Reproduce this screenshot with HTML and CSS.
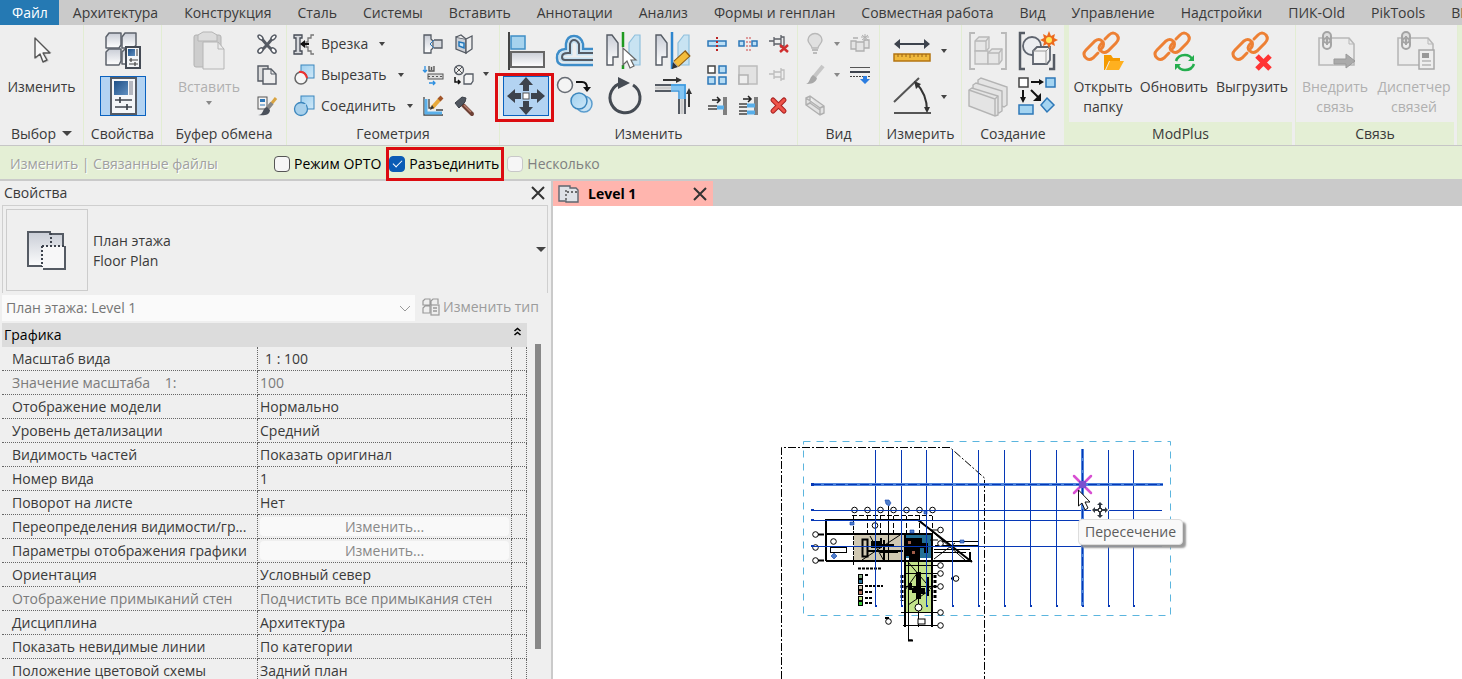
FILE: index.html
```
<!DOCTYPE html>
<html lang="ru">
<head>
<meta charset="utf-8">
<title>Level 1</title>
<link rel="stylesheet" href="styles.css">
</head>
<body>
<svg class="defs" aria-hidden="true">
  <defs>
    <linearGradient id="metal" x1="0" y1="0" x2="0" y2="1"><stop offset="0" stop-color="#c9cdd6"/><stop offset="1" stop-color="#fff"/></linearGradient>
    <linearGradient id="sky" x1="0" y1="0" x2="1" y2="1"><stop offset="0" stop-color="#9fd0ef"/><stop offset="1" stop-color="#cfe8f8"/></linearGradient>
    <linearGradient id="navy" x1="0" y1="0" x2="1" y2="1"><stop offset="0" stop-color="#1e4f86"/><stop offset="1" stop-color="#5f8fc0"/></linearGradient>
    <g id="chain" fill="none" stroke="#ed8034" stroke-width="3" stroke-linecap="round">
      <path d="M16 22 L11 27 Q7 30 4 27 Q0 23 4 19 L13 10 Q17 7 20 10 Q23 13 20 17 L18 19"/>
      <path d="M23 8 L27 4 Q31 0 35 4 Q38 8 34 12 L26 20 Q22 23 19 20 Q15 17 19 13 L21 11"/>
    </g>
    <g id="sheet">
      <path d="M5 7H35L40 13V34H5Z" fill="#ececec" stroke="#b8b8b8" stroke-width="1.6"/>
      <path d="M35 7V13H40" fill="none" stroke="#b8b8b8"/>
      <rect x="9" y="1" width="8" height="11" rx="4" fill="#ddd" stroke="#a4a4a4" stroke-width="2"/>
      <rect x="9" y="7" width="8" height="11" rx="4" fill="none" stroke="#a4a4a4" stroke-width="2"/>
      <path d="M13 5V14" stroke="#a4a4a4" stroke-width="2"/>
    </g>
    <g id="cubes">
      <g fill="url(#metal)" stroke="#5d636c" stroke-width="1.5" stroke-linejoin="round">
        <path d="M3 6 6 2H18V14L16 17H3Z"/><path d="M19 6 22 2H33V14L31 17H19Z"/><path d="M3 21 6 18H18V30L16 34H3Z"/><path d="M19 21 22 18H33V33H19Z"/>
      </g>
    </g>
    <g id="mirrorhalf">
      <path d="M3 4H8L14 12V26H9V34H3Z" fill="url(#metal)" stroke="#555b64" stroke-width="1.4"/>
      <path d="M36 4H31L25 12V34H36Z" fill="#c8e3f2" stroke="#8fc0dd" stroke-width="1.2"/>
    </g>
    <g id="pin" fill="none" stroke="currentColor" stroke-width="1.3"><path d="M1 8H6M6 4V13M6 6H13M6 11H13M13 2V15M13 4H16V13H13"/></g>
  </defs>
</svg>

<nav class="tabs">
  <a class="tab file" href="#">Файл</a>
  <a class="tab" href="#">Архитектура</a>
  <a class="tab" href="#">Конструкция</a>
  <a class="tab" href="#">Сталь</a>
  <a class="tab" href="#">Системы</a>
  <a class="tab" href="#">Вставить</a>
  <a class="tab" href="#">Аннотации</a>
  <a class="tab" href="#">Анализ</a>
  <a class="tab" href="#">Формы и генплан</a>
  <a class="tab" href="#">Совместная работа</a>
  <a class="tab" href="#">Вид</a>
  <a class="tab" href="#">Управление</a>
  <a class="tab" href="#">Надстройки</a>
  <a class="tab" href="#">ПИК-Old</a>
  <a class="tab" href="#">PikTools</a>
  <a class="tab" href="#">BIM</a>
</nav>

<div class="ribbon">
  <section class="panel">
    <div class="body center">
      <button class="big">
        <svg width="40" height="40" viewBox="0 0 40 40"><path d="M15 8V28L20 24 24 32 28 30 24 22H31Z" fill="#bbb" opacity=".6"/><path d="M14 7V27L19 23 22 31 26 29 22 22H29Z" fill="#f7f7f7" stroke="#555" stroke-width="1.4" stroke-linejoin="round"/></svg>
        <span>Изменить</span>
      </button>
    </div>
    <button class="label">Выбор <i class="caret wide"></i></button>
  </section>

  <section class="panel">
    <div class="body stack">
      <button class="ico" aria-label="Тип"><svg width="40" height="40" viewBox="0 0 40 40"><use href="#cubes"/><rect x="23" y="16" width="14" height="21" fill="#f4f6f8" stroke="#454b55" stroke-width="2"/><rect x="25" y="18" width="7" height="7" fill="url(#navy)"/><path d="M34 18V25" stroke="#999" stroke-width="2"/><path d="M26 29H35M26 33H35M28 27V31M32 31V35" stroke="#444" stroke-width="1.2"/></svg></button>
      <button class="ico active" aria-label="Свойства"><svg width="40" height="38" viewBox="0 0 40 38"><rect x="8" y="1" width="25" height="36" fill="#f4f6f8" stroke="#555b64" stroke-width="2"/><rect x="11" y="4" width="14" height="14" fill="url(#navy)"/><rect x="26" y="4" width="4" height="14" fill="#b5b8c0"/><path d="M12 23H29M12 30H29M17 20V26M24 27V33" stroke="#3f454d" stroke-width="1.7"/></svg></button>
    </div>
    <span class="label">Свойства</span>
  </section>

  <section class="panel">
    <div class="body clip">
      <button class="big off">
        <svg width="40" height="40" viewBox="0 0 40 40"><rect x="5" y="4" width="27" height="32" rx="2" fill="#cdcdcd" stroke="#b2b2b2"/><path d="M9 10V4L14 1H23L28 4V10Z" fill="#ddd" stroke="#b5b5b5"/><path d="M14 11H29L35 18V38H14Z" fill="#ebebeb" stroke="#b5b5b5"/><path d="M29 11V18H35" fill="none" stroke="#b5b5b5"/></svg>
        <span>Вставить</span>
        <i class="caret"></i>
      </button>
      <div class="smalls">
        <button class="sm" aria-label="Вырезать"><svg width="22" height="22" viewBox="0 0 22 22"><g fill="none" stroke="#565b64" stroke-width="1.5"><path d="M6 6 11 12 16 17M16 6 11 12 6 17" stroke-width="3"/><ellipse cx="4.500" cy="4.500" rx="1.700" ry="3" transform="rotate(-45 4.500 4.500)" fill="#fff"/><ellipse cx="17.500" cy="4.500" rx="1.700" ry="3" transform="rotate(45 17.500 4.500)" fill="#fff"/><ellipse cx="4.500" cy="17.500" rx="2" ry="3" transform="rotate(45 4.500 17.500)" fill="#fff"/><ellipse cx="17.500" cy="17.500" rx="2" ry="3" transform="rotate(-45 17.500 17.500)" fill="#fff"/></g></svg></button>
        <button class="sm" aria-label="Копировать"><svg width="22" height="22" viewBox="0 0 22 22"><path d="M2 2H12V17H2Z" fill="#ddd" stroke="#555b64" stroke-width="1.4"/><path d="M7 5H15L20 10V20H7Z" fill="#eee" stroke="#555b64" stroke-width="1.4"/><path d="M15 5V10H20" fill="none" stroke="#555b64"/></svg></button>
        <button class="sm" aria-label="Формат"><svg width="22" height="22" viewBox="0 0 22 22"><rect x="2" y="2" width="9" height="12" fill="#f4f4f4" stroke="#555"/><rect x="4" y="4" width="5" height="3" fill="#2e78b8"/><path d="M4 10H9" stroke="#2e78b8"/><path d="M20 3 12 13" stroke="#d9a441" stroke-width="3"/><path d="M16 8 11 14" stroke="#888" stroke-width="4"/><path d="M2 20C8 20 6 13 11 12L14 15C14 20 8 21 2 20Z" fill="#4b515b"/></svg></button>
      </div>
    </div>
    <span class="label">Буфер обмена</span>
  </section>

  <section class="panel">
    <div class="body geom">
      <div class="rows">
        <button class="row"><svg width="22" height="22" viewBox="0 0 22 22"><path d="M1 2H9V5H7V18H9V21H1V18H3V5H1Z" fill="#d8dade" stroke="#454b55" stroke-width="1.300"/><path d="M21 2H18V5H15V9H13V14H15V18H18V21H21" fill="none" stroke="#777" stroke-width="1.300"/><path d="M8 11H16" stroke="#111" stroke-width="2"/><path d="M12 7 7 11 12 15Z" fill="#111"/></svg>Врезка<i class="caret"></i></button>
        <button class="row"><svg width="22" height="22" viewBox="0 0 22 22"><rect x="8" y="1" width="13" height="13" fill="url(#sky)" stroke="#3b86bd"/><circle cx="8" cy="14" r="6" fill="#f6f6f6" stroke="#666" stroke-width="1.500"/><path d="M6 8Q12 7 14 14" fill="none" stroke="#e33" stroke-width="2"/></svg>Вырезать<i class="caret"></i></button>
        <button class="row"><svg width="22" height="22" viewBox="0 0 22 22"><rect x="8" y="1" width="13" height="13" fill="url(#sky)" stroke="#3b86bd"/><circle cx="8" cy="14" r="6.500" fill="#a8d0eb" stroke="#3b86bd" stroke-width="1.300"/><path d="M9 9H13V13H9Z" fill="#a8d0eb"/></svg>Соединить<i class="caret"></i></button>
      </div>
      <div class="grid2">
        <button class="sm" aria-label="Проём"><svg width="22" height="22" viewBox="0 0 22 22"><path d="M2 2H9V6L11 8V15L9 17V20H2Z" fill="url(#metal)" stroke="#555b64" stroke-width="1.300"/><path d="M12 7H20V15H12" fill="#d6d9de" stroke="#555b64" stroke-width="1.300"/><path d="M12 7 8 11 12 15" fill="none" stroke="#2e78b8"/></svg></button>
        <button class="sm" aria-label="Стена"><svg width="22" height="22" viewBox="0 0 22 22"><path d="M3 4 13 6V20L3 16Z" fill="#cdd0d6" stroke="#555b64" stroke-width="1.300"/><path d="M3 4 8 2 13 6 19 3V16L13 20V6" fill="#eee" stroke="#555b64" stroke-width="1.300"/><path d="M6 9 11 10V15L6 13Z" fill="#cde9fb" stroke="#2277bb" stroke-width="1.500"/></svg></button>
        <button class="sm" aria-label="Балка"><svg width="22" height="22" viewBox="0 0 22 22"><path d="M3 2V8M1 6 3 8 5 6M7 19H13M11 17 13 19 11 21" stroke="#2c8fe0" fill="none" stroke-width="1.300"/><path d="M7 2V7H12V2M9.500 3V6" fill="#ddd" stroke="#555" stroke-width="1.300"/><rect x="6" y="10" width="15" height="5" fill="#ddd" stroke="#555"/><path d="M6 12.500H21" stroke="#555" stroke-dasharray="2 2"/></svg></button>
        <button class="sm" aria-label="Разделить"><svg width="22" height="22" viewBox="0 0 22 22"><circle cx="6" cy="6" r="4.500" fill="#eee" stroke="#555b64" stroke-width="1.300"/><path d="M3 3 9 9M9 3 3 9" stroke="#555"/><path d="M2 13V18H7M5 16 7 18 5 20" fill="none" stroke="#111" stroke-width="1.500"/><path d="M11 12 13 10H20V17L18 20H11Z" fill="#f4f4f4" stroke="#555b64" stroke-width="1.300"/></svg></button>
        <button class="sm" aria-label="Соединения стен"><svg width="22" height="22" viewBox="0 0 22 22"><path d="M2 2V20H21M7 4V13H10M14 15H21" fill="none" stroke="#444" stroke-width="1.300"/><path d="M4 4V18H20" fill="none" stroke="#5ab0ea" stroke-width="3"/><path d="M10 13 18 4" stroke="#e8a93a" stroke-width="4"/><path d="M17 5 20 2" stroke="#a1552a" stroke-width="4"/><path d="M8 15 10 10 12 13Z" fill="#333"/></svg></button>
        <button class="sm" aria-label="Демонтаж"><svg width="22" height="22" viewBox="0 0 22 22"><path d="M10 10 19 19" stroke="#6d4035" stroke-width="4" stroke-linecap="round"/><path d="M11 10 18 17" stroke="#b97f6d" stroke-width="1.500"/><path d="M2 8 9 2 13 3 12 7 6 13Z" fill="#50565f" stroke="#3b4048"/></svg></button>
      </div>
      <i class="caret"></i>
    </div>
    <span class="label">Геометрия</span>
  </section>

  <section class="panel">
    <div class="body modify">
      <div class="grid4">
        <button class="ico" aria-label="Выровнять"><svg width="40" height="40" viewBox="0 0 40 40"><path d="M3 1V39" stroke="#444" stroke-width="2"/><rect x="5" y="5" width="14" height="13" fill="#a6d3ee" stroke="#3f8fc6" stroke-width="1.500"/><rect x="5" y="21" width="33" height="15" fill="url(#metal)" stroke="#666" stroke-width="2"/></svg></button>
        <button class="ico" aria-label="Сместить"><svg width="40" height="40" viewBox="0 0 40 40"><path d="M38 34H9Q2 34 2 27 2 18 11 18V13Q12 5 19 5T28 13V18H38" fill="none" stroke="#3d8dc9" stroke-width="2.500"/><path d="M38 29H11Q6 29 6 25 7 22 13 22H15V13Q16 9 19 9T24 13V22H38" fill="none" stroke="#c5e1f2" stroke-width="5"/><path d="M38 29H10Q7 29 7 26 7 22 13 22H15V13Q16 9 19 9T24 13V22H38" fill="none" stroke="#555b64" stroke-width="2"/></svg></button>
        <button class="ico" aria-label="Отразить - выбрать ось"><svg width="40" height="40" viewBox="0 0 40 40"><use href="#mirrorhalf"/><path d="M19 1V16M19 34V38" stroke="#1f9a1f" stroke-width="2.500"/><path d="M19 17V34L23 30 26 37 30 35 27 29H32Z" fill="#fff" stroke="#666" stroke-width="1.200"/></svg></button>
        <button class="ico" aria-label="Отразить - нарисовать ось"><svg width="40" height="40" viewBox="0 0 40 40"><use href="#mirrorhalf"/><path d="M19 1V38" stroke="#2e86cf" stroke-width="2.500"/><path d="M23 33 35 22" stroke="#8b5a14" stroke-width="8"/><path d="M23 33 34 23" stroke="#f3bd3c" stroke-width="6"/><path d="M19 38 20 31 25 36Z" fill="#333"/></svg></button>
        <button class="ico active marked" aria-label="Переместить"><svg width="40" height="38" viewBox="0 0 40 38"><path d="M20 0 27 8H23V14H17V8H13ZM20 38 27 30H23V24H17V30H13ZM1 19 9 12V16H15V22H9V26ZM39 19 31 12V16H25V22H31V26Z" fill="#3d434d"/><rect x="17" y="16" width="6" height="6" fill="#fff" stroke="#555"/></svg></button>
        <button class="ico" aria-label="Копировать"><svg width="40" height="40" viewBox="0 0 40 40"><circle cx="10" cy="8" r="7.500" fill="#f4f4f4" stroke="#666b73" stroke-width="1.500"/><path d="M21 5H27Q32 5 32 11" fill="none" stroke="#111" stroke-width="2"/><path d="M28 10H36L32 15Z" fill="#111"/><circle cx="29" cy="27" r="8" fill="#c8e3f4" stroke="#5b9dce" stroke-width="1.500"/><circle cx="24" cy="24" r="8" fill="url(#sky)" stroke="#3b86bd" stroke-width="1.500"/></svg></button>
        <button class="ico" aria-label="Повернуть"><svg width="40" height="40" viewBox="0 0 40 40"><path d="M29 8A15 15 0 1 1 18 6" fill="none" stroke="#454b53" stroke-width="3"/><path d="M14 0 26 6 14 12Z" fill="#454b53"/></svg></button>
        <button class="ico" aria-label="Обрезать"><svg width="40" height="40" viewBox="0 0 40 40"><path d="M2 8H18M2 14H18M26 22V37M32 22V37" stroke="#555b64" stroke-width="2"/><path d="M2 11H18M29 22V37" stroke="#ccc" stroke-width="3"/><path d="M18 10H30V22" fill="none" stroke="#84c6f3" stroke-width="6"/><path d="M18 8H32V22M18 14H26V22" fill="none" stroke="#3996dd" stroke-width="1.500"/><path d="M10 3H25M36 30V14" stroke="#333" stroke-width="2"/><path d="M23 0 29 3 23 6ZM33 17 36 11 39 17Z" fill="#333"/></svg></button>
      </div>
      <div class="grid3">
        <button class="sm" aria-label="Разделить элемент"><svg width="22" height="22" viewBox="0 0 22 22"><rect x="2" y="8" width="18" height="5" fill="#bfe0f5" stroke="#2e78b8" stroke-width="1.500"/><path d="M11 4V18" stroke="#b22" stroke-width="2" stroke-dasharray="2 2"/></svg></button>
        <button class="sm" aria-label="Разделить с зазором"><svg width="22" height="22" viewBox="0 0 22 22"><rect x="2" y="8" width="5" height="5" fill="#bfe0f5" stroke="#2e78b8" stroke-width="1.500"/><rect x="15" y="8" width="5" height="5" fill="#bfe0f5" stroke="#2e78b8" stroke-width="1.500"/><path d="M10 4V18M13 4V18" stroke="#c44" stroke-width="1" stroke-dasharray="2 2"/></svg></button>
        <button class="sm" aria-label="Открепить"><svg width="22" height="22" viewBox="0 0 22 22" color="#5b5f66"><use href="#pin"/><path d="M12 12 20 19M20 12 12 19" stroke="#cf2e2e" stroke-width="2.500"/></svg></button>
        <button class="sm" aria-label="Массив"><svg width="22" height="22" viewBox="0 0 22 22"><rect x="2" y="2" width="7" height="7" fill="#fff" stroke="#444" stroke-width="1.500"/><g fill="#b6dcf4" stroke="#2e78b8" stroke-width="1.500"><rect x="13" y="2" width="7" height="7"/><rect x="2" y="13" width="7" height="7"/><rect x="13" y="13" width="7" height="7"/></g></svg></button>
        <button class="sm" aria-label="Масштаб"><svg width="22" height="22" viewBox="0 0 22 22"><rect x="2" y="2" width="18" height="18" fill="#e2e2e2" stroke="#bcbcbc" stroke-width="1.500"/><rect x="2" y="11" width="9" height="9" fill="#eee" stroke="#b2b2b2" stroke-width="1.500"/></svg></button>
        <button class="sm" aria-label="Закрепить"><svg width="22" height="22" viewBox="0 -2 22 22" color="#bdbdbd"><use href="#pin"/></svg></button>
        <button class="sm" aria-label="Обрезать один"><svg width="22" height="22" viewBox="0 0 22 22"><path d="M2 11H11M2 14H11M18 2V20M20 2V20" stroke="#444" stroke-width="1.300"/><path d="M11 12.500H18" stroke="#58aee9" stroke-width="4"/><path d="M6 5H13M11 2 14 5 11 8" fill="none" stroke="#222" stroke-width="1.500"/></svg></button>
        <button class="sm" aria-label="Обрезать несколько"><svg width="22" height="22" viewBox="0 0 22 22"><path d="M2 9H10M2 12H10M2 16H10M2 19H10M18 2V20M20 2V20" stroke="#444" stroke-width="1.300"/><path d="M10 10.500H18M10 17.500H18" stroke="#58aee9" stroke-width="4"/><path d="M6 4H13M11 1 14 4 11 7" fill="none" stroke="#222" stroke-width="1.500"/></svg></button>
        <button class="sm" aria-label="Удалить"><svg width="22" height="22" viewBox="0 0 22 22"><path d="M5 5 16 16M16 5 5 16" stroke="#a92020" stroke-width="5" stroke-linecap="round"/><path d="M5 5 16 16M16 5 5 16" stroke="#ee5349" stroke-width="3" stroke-linecap="round"/></svg></button>
      </div>
    </div>
    <span class="label">Изменить</span>
  </section>

  <section class="panel">
    <div class="body view">
      <button class="sm" aria-label="Скрыть"><svg width="22" height="22" viewBox="0 0 22 22"><path d="M8 15C8 12 4 11 4 7A7 6.500 0 0 1 18 7C18 11 14 12 14 15Z" fill="#e0e0e0" stroke="#b8b8b8" stroke-width="1.400"/><path d="M8 17H14M9 20H13" stroke="#aaa" stroke-width="1.500"/></svg></button>
      <i class="caret soft"></i>
      <button class="sm" aria-label="Рамка"><svg width="22" height="22" viewBox="0 0 22 22"><path d="M2 8H7V16H2ZM7 9H15V18H7ZM15 7H20V15H15ZM4 5H9" fill="#e4e4e4" stroke="#b0b0b0" stroke-width="1.300"/><path d="M16 1V8M12 4H20M13 2 19 7M19 2 13 7" stroke="#b0b0b0"/></svg></button>
      <button class="sm" aria-label="Переопределить"><svg width="22" height="22" viewBox="0 0 22 22"><path d="M19 2 10 13" stroke="#c6c6c6" stroke-width="4"/><path d="M2 20C6 19 5 14 9 11L13 14C12 19 7 20 2 20Z" fill="#a8a8a8"/></svg></button>
      <i class="caret soft"></i>
      <button class="sm" aria-label="Толщина линий"><svg width="22" height="22" viewBox="0 0 22 22"><path d="M1 3.500H21" stroke="#555"/><path d="M1 8H21" stroke="#3d434d" stroke-width="2"/><path d="M1 12.500H21" stroke="#444" stroke-dasharray="2 1"/><path d="M14 12H18V15H21L16 20 11 15H14Z" fill="#2b7de0"/></svg></button>
      <button class="sm" aria-label="Сечение"><svg width="22" height="22" viewBox="0 0 22 22"><path d="M2 3 6 1 20 11V18L16 20 2 10ZM2 3 16 13V20M16 13 20 11M6 1V8L16 15M6 8 2 10" fill="#e3e3e3" stroke="#b0b0b0" stroke-width="1.400"/></svg></button>
    </div>
    <span class="label">Вид</span>
  </section>

  <section class="panel">
    <div class="body measure">
      <button class="ico" aria-label="Линейка"><svg width="40" height="40" viewBox="0 0 40 40"><path d="M4 13H36" stroke="#3d434d" stroke-width="2"/><path d="M2 13 8 8V18ZM38 13 32 8V18Z" fill="#3d434d"/><rect x="2" y="23" width="36" height="7" fill="#f0b93c" stroke="#b47512" stroke-width="1.500"/><path d="M6 23V26M10 23V26M14 23V26M18 23V27M22 23V26M26 23V26M30 23V26M34 23V26" stroke="#9a6516"/></svg></button>
      <i class="caret"></i>
      <button class="ico" aria-label="Угол"><svg width="40" height="40" viewBox="0 0 40 40"><path d="M2 25 27 1M2 36H39" stroke="#555" stroke-width="2"/><path d="M24 6Q35 17 35 34" fill="none" stroke="#333" stroke-width="2"/><path d="M22 4 29 7 24 12ZM32 30H38L35 36Z" fill="#333"/></svg></button>
      <i class="caret"></i>
    </div>
    <span class="label">Измерить</span>
  </section>

  <section class="panel">
    <div class="body create">
      <button class="ico" aria-label="Сборка"><svg width="40" height="40" viewBox="0 0 40 40"><path d="M7 2H2V38H7M33 2H38V38H33" fill="none" stroke="#b9b9b9" stroke-width="1.800"/><g fill="#e6e6e6" stroke="#b9b9b9" stroke-width="1.300"><path d="M7 10 11 6H21V17L18 20H7Z"/><path d="M7 20H20V33H7Z"/><path d="M20 22 24 18H34V29L31 33H20Z"/><path d="M7 10H18V20M18 10 21 6M20 22H31V33M31 22 34 18" fill="none"/></g></svg></button>
      <button class="ico" aria-label="Группа"><svg width="40" height="40" viewBox="0 0 40 40"><path d="M8 2H3V38H8M32 38H37V23" fill="none" stroke="#555b64" stroke-width="2.500"/><circle cx="15" cy="15" r="9" fill="#eceef1" stroke="#5f656f" stroke-width="1.800"/><path d="M16 20 20 16H33V29L30 33H16Z" fill="#f3f3f3" stroke="#5f656f" stroke-width="1.800"/><path d="M16 20H29V33M29 20 33 16" stroke="#999" fill="none"/><path d="M32 0 34 5 38 3 37 7 41 9 37 11 38 15 34 13 32 17 30 13 26 15 27 11 23 9 27 7 26 3 30 5Z" fill="#ec6a1c"/><circle cx="32" cy="9" r="3" fill="#ffe75c"/></svg></button>
      <button class="ico" aria-label="Части"><svg width="40" height="40" viewBox="0 0 40 40"><g fill="#e4e4e4" stroke="#b4b4b4" stroke-width="1.400"><path d="M10 3 13 1 39 10V28L36 30 10 20Z"/><path d="M5 8 8 6 34 14V34L31 36 5 25Z"/><path d="M1 13 4 11 30 19V38L27 39 1 29Z"/><path d="M1 13 27 22V39M27 22 30 19" fill="none"/></g></svg></button>
      <button class="ico" aria-label="Подобные"><svg width="40" height="40" viewBox="0 0 40 40"><rect x="2" y="1" width="9" height="9" fill="#fff" stroke="#444" stroke-width="1.500"/><g fill="#a4d4f1" stroke="#2e78b8" stroke-width="1.500"><rect x="29" y="1" width="9" height="9"/><rect x="2" y="28" width="14" height="9"/><path d="M30 21 37 28 30 35 24 28Z"/></g><path d="M14 5H24M6 13V23M14 13 22 21" stroke="#111" stroke-width="2"/><path d="M22 2 27 5 22 8ZM3 20H9L6 26ZM24 16V24H16Z" fill="#111"/></svg></button>
    </div>
    <span class="label">Создание</span>
  </section>

  <section class="panel ctx">
    <div class="body links">
      <button class="big"><svg width="42" height="40" viewBox="0 0 42 40"><use href="#chain"/><path d="M22 24H29L31 27H38V30H27L23 39H22Z" fill="#f59a00"/><path d="M28 30H42L37 39H24Z" fill="#ffb01f"/></svg><span>Открыть папку</span></button>
      <button class="big"><svg width="42" height="40" viewBox="0 0 42 40"><use href="#chain"/><path d="M23 30Q25 24 32 24 37 24 39 28M41 33Q39 39 32 39 27 39 25 35" fill="none" stroke="#25ae4e" stroke-width="2.500"/><path d="M41 24V30H35ZM22 39V33H28Z" fill="#25ae4e"/></svg><span>Обновить</span></button>
      <button class="big"><svg width="42" height="40" viewBox="0 0 42 40"><use href="#chain"/><path d="M26 25 39 38M39 25 26 38" stroke="#ff3434" stroke-width="5"/></svg><span>Выгрузить</span></button>
    </div>
    <span class="label">ModPlus</span>
  </section>

  <section class="panel ctx">
    <div class="body links two">
      <button class="big off"><svg width="42" height="40" viewBox="0 0 42 40"><use href="#sheet"/><path d="M20 28H32V23L41 30 32 37V33H20Z" fill="#aaa" stroke="#999"/></svg><span>Внедрить связь</span></button>
      <button class="big off"><svg width="42" height="40" viewBox="0 0 42 40"><use href="#sheet"/><rect x="26" y="19" width="15" height="19" fill="#eee" stroke="#a8a8a8" stroke-width="1.500"/><rect x="29" y="22" width="7" height="5" fill="#999"/><path d="M29 30H38M29 34H38" stroke="#999"/></svg><span>Диспетчер связей</span></button>
    </div>
    <span class="label">Связь</span>
  </section>
</div>

<div class="options">
  <span class="mode">Изменить | Связанные файлы</span>
  <label class="opt"><input type="checkbox">Режим ОРТО</label>
  <label class="opt marked"><input type="checkbox" checked>Разъединить</label>
  <label class="opt dim"><input type="checkbox" disabled>Несколько</label>
</div>

<div class="work">
  <aside class="props">
    <header class="props-head"><span>Свойства</span><button class="close" aria-label="Закрыть свойства"><svg width="14" height="14" viewBox="0 0 14 14"><path d="M1 1 13 13M13 1 1 13" stroke="#333" stroke-width="2"/></svg></button></header>
    <div class="type">
      <div class="thumb"><svg width="42" height="42" viewBox="0 0 42 42"><path d="M2 3H25V5H37V16H38V39H17V37H2Z" fill="url(#metal)"/><path d="M16 17H39V40H16Z" fill="#f7f7f8"/><path d="M16 37H2V3H24V5H37V16M39 17V40H17" fill="none" stroke="#555b64" stroke-width="2"/><path d="M25 4V17M16 17H39M16 17V38" fill="none" stroke="#3d434d" stroke-width="2" stroke-dasharray="2 2"/></svg></div>
      <div class="type-name">План этажа<br>Floor Plan</div>
      <button class="type-open" aria-label="Выбор типа"><i class="caret wide"></i></button>
    </div>
    <div class="instance">
      <select aria-label="Экземпляр" disabled><option>План этажа: Level 1</option></select>
      <button disabled><svg width="18" height="18" viewBox="0 0 18 18"><path d="M1 3 3 1H8V7H1ZM9 3 11 1H16V6M1 10 3 8H8V15H1ZM9 3V7" fill="none" stroke="#999" stroke-width="1.200"/><rect x="9" y="7" width="8" height="10" fill="#eee" stroke="#999" stroke-width="1.200"/><path d="M11 10H15M11 13H15" stroke="#999" stroke-width="1.300"/></svg>Изменить тип</button>
    </div>
    <div class="list">
      <table>
        <colgroup><col class="c1"><col class="c2"><col class="c3"></colgroup>
        <thead><tr><th colspan="3"><div class="group">Графика<svg width="9" height="10" viewBox="0 0 9 10"><path d="M1.500 4 4.500 1.500 7.500 4M1.500 8 4.500 5.500 7.500 8" fill="none" stroke="#000" stroke-width="1.600"/></svg></div></th></tr></thead>
        <tbody>
          <tr><td>Масштаб вида</td><td class="indent">1 : 100</td><td></td></tr>
          <tr class="ro"><td>Значение масштаба&nbsp;&nbsp;&nbsp; 1:</td><td>100</td><td></td></tr>
          <tr><td>Отображение модели</td><td>Нормально</td><td></td></tr>
          <tr><td>Уровень детализации</td><td>Средний</td><td></td></tr>
          <tr><td>Видимость частей</td><td>Показать оригинал</td><td></td></tr>
          <tr><td>Номер вида</td><td>1</td><td></td></tr>
          <tr><td>Поворот на листе</td><td>Нет</td><td></td></tr>
          <tr><td>Переопределения видимости/гр...</td><td><button>Изменить...</button></td><td></td></tr>
          <tr><td>Параметры отображения графики</td><td><button>Изменить...</button></td><td></td></tr>
          <tr><td>Ориентация</td><td>Условный север</td><td></td></tr>
          <tr class="ro"><td>Отображение примыканий стен</td><td>Подчистить все примыкания стен</td><td></td></tr>
          <tr><td>Дисциплина</td><td>Архитектура</td><td></td></tr>
          <tr><td>Показать невидимые линии</td><td>По категории</td><td></td></tr>
          <tr><td>Положение цветовой схемы</td><td>Задний план</td><td></td></tr>
        </tbody>
      </table>
      <div class="track"><div class="thumbbar"></div></div>
    </div>
  </aside>

  <main class="view-area">
    <div class="doc-tabs">
      <div class="doc-tab"><svg width="22" height="20" viewBox="0 0 22 20"><path d="M1 2H12V4H18L20 6V18H8V17H1Z" fill="#dfe2e7" stroke="#5f656f" stroke-width="1.400"/><path d="M8 6V17M9 8H19" stroke="#444" stroke-width="1.300" stroke-dasharray="2 2" fill="none"/></svg><b>Level 1</b><button class="close" aria-label="Закрыть вид"><svg width="14" height="14" viewBox="0 0 14 14"><path d="M1 1 13 13M13 1 1 13" stroke="#333" stroke-width="2"/></svg></button></div>
    </div>
    <div class="canvas">
      <svg class="plan" width="909" height="473" viewBox="553 206 909 473">
        <path d="M781.500 679V447.500H950L984.500 478V679" fill="none" stroke="#000" stroke-dasharray="8 2 2 2"/>
        <rect x="803.500" y="441.500" width="367" height="174" fill="none" stroke="#5bb5de" stroke-dasharray="7 6"/>
        <!-- rooms -->
        <rect x="854" y="534" width="51" height="27" fill="#d0c8b2"/>
        <rect x="905" y="534" width="27" height="24" fill="#226f96"/>
        <rect x="905" y="560" width="27" height="52" fill="#c3e38c"/>
        <g fill="none" stroke="#000">
          <path d="M826 561V520H918L972 562M826 534H932M826 561H972" stroke-width="2"/>
          <path d="M905 534V627M932 534V627" stroke-width="2"/>
          <path d="M853.500 516V566" stroke-dasharray="4 1"/>
          <path d="M867.500 516V534M880.500 516V534M893.500 516V534M906.500 516V534M919.500 516V534M932.500 516V534M852 515.500H932" stroke-dasharray="5 2"/>
          <path d="M888.500 506V561M908.500 560V640H912M918.500 556V627M901 612.500H940M903 625.500H940M906 573.500H940M906 565.500H940M906 586.500H940"/>
          <path d="M919 520 965 560M870 536 884 561M900 535 862 560M908 562 932 590M930 590 908 605M918 572 905 590M935 545.500H978M942 541.500H978M934 552.500H966M934 549.500H970M934 559 955 543M930 530 938 530M930 540 938 540" />
          <rect x="830.500" y="547.500" width="16" height="5"/><rect x="862.500" y="539.500" width="5" height="17" stroke-width="2"/>
          <path d="M874 545H894M884 540V560M880 552H898M868 551H903" stroke-width="2"/>
          <path d="M902 575V601M935 575V601" stroke-width="3" stroke-dasharray="3 2"/><path d="M970 552V560" stroke-width="2"/>
        </g>
        <path d="M871 541H880V538H882V548H871ZM905 538H922V543H928V553H924V548H920V562H909V556H905ZM914 587H916V572H921V588H925V594H921V599H916V593H912V588ZM908 583H912V590H908ZM926 577H929V596H926Z" fill="#000"/>
        <path d="M908 541H911V544H908ZM912 551H915V554H912Z" fill="#a25d48"/>
        <g fill="#fff" stroke="#000" stroke-width="1">
          <circle cx="854.500" cy="510" r="2.800"/><circle cx="867.500" cy="510" r="2.800"/><circle cx="880.500" cy="510" r="2.800"/><circle cx="893.500" cy="510" r="2.800"/><circle cx="906.500" cy="510" r="2.800"/><circle cx="919.500" cy="510" r="2.800"/><circle cx="932.500" cy="510" r="2.800"/>
          <circle cx="815.500" cy="534.500" r="2.800"/><circle cx="815.500" cy="547.500" r="2.800"/><circle cx="815.500" cy="560.500" r="2.800"/><circle cx="833.500" cy="541.500" r="2.800"/><circle cx="875" cy="525.500" r="2.800"/>
          <circle cx="940.500" cy="530" r="2.800"/><circle cx="940.500" cy="543.500" r="2.800"/><circle cx="940.500" cy="565.500" r="2.800"/><circle cx="940.500" cy="573.500" r="2.800"/><circle cx="940.500" cy="586.500" r="2.800"/><circle cx="940.500" cy="612.500" r="2.800"/><circle cx="940.500" cy="625.500" r="2.800"/><circle cx="956" cy="578.500" r="2.800"/><circle cx="888.500" cy="621.500" r="2.800"/><circle cx="918.500" cy="607.500" r="3.500"/>
          <rect x="918" y="619" width="7" height="5"/>
        </g>
        <path d="M818 534.500H824M818 560.500H824M951 578.500H954M885 618 889 618M908 640.500H913" stroke="#000" stroke-width="2"/>
        <path d="M858 568.500H881M865 575H869M865 586H883M865 592H873M865 598H872M865 603H873" stroke="#000" stroke-width="2" stroke-dasharray="3 1"/>
        <g stroke="#000" stroke-width="1"><rect x="858.500" y="574.500" width="4" height="4" fill="#8bae86"/><rect x="858.500" y="579.500" width="4" height="4" fill="#226f96"/><rect x="858.500" y="585.500" width="4" height="4" fill="#d0c8b2"/><rect x="858.500" y="590.500" width="4" height="4" fill="#b3725d"/><rect x="858.500" y="596.500" width="4" height="4" fill="#c3e38c"/><rect x="858.500" y="601.500" width="4" height="4" fill="#36c837"/></g>
        <path d="M885 500H889L891 503 889 506 886 504ZM831 556 834 553 837 556 834 559ZM850 522H854V525H850ZM910 530H914V533H910ZM960 540H964V543H960ZM924 511H927V514H924Z" fill="#4f7ec9" stroke="#0a3caf" stroke-width=".6"/>
        <!-- grids -->
        <path d="M875.500 450V607M901.500 450V607M926.500 450V607M952.500 450V607M978.500 450V607M1004.500 450V607M1030.500 450V607M1056.500 450V607M1108.500 450V607M1133.500 450V607M812 510.500H1162M812 520.500H1162M812 546.500H1162" stroke="#0638b6"/>
        <path d="M1082.500 449V606M812 484.500H1163" stroke="#4d83dc" stroke-width="3"/>
        <path d="M1082.500 449V606M812 484.500H1163" stroke="#0638b6" stroke-dasharray="9 3"/>
        <path d="M875 605h2v2h-2zM901 605h2v2h-2zM926 605h2v2h-2zM952 605h2v2h-2zM978 605h2v2h-2zM1004 605h2v2h-2zM1030 605h2v2h-2zM1056 605h2v2h-2zM1082 605h2v2h-2zM1108 605h2v2h-2zM1133 605h2v2h-2zM811 483h3v3h-3zM811 509h3v2h-3zM811 519h3v2h-3zM811 545h3v2h-3z" fill="#0638b6"/>
        <!-- snap marker and cursor -->
        <path d="M1074 476 1091 493M1091 476 1074 493" stroke="#d84fd2" stroke-width="2.500" stroke-linecap="round"/><rect x="1079" y="481" width="7" height="7" fill="#7b50cf"/>
        <path d="M1078.500 490V506L1082 503 1085 510 1088 508 1085 502H1090Z" fill="#fff" stroke="#111"/>
        <path d="M1100 502 1103 505H1101V508H1099V505H1097ZM1100 518 1103 515H1101V512H1099V515H1097ZM1092 510 1095 507V509H1098V511H1095V513ZM1108 510 1105 507V509H1102V511H1105V513Z" fill="#333a44" stroke="#fff" stroke-width="2" paint-order="stroke"/><rect x="1098.500" y="508.500" width="3" height="3" fill="#fff" stroke="#333"/>
      </svg>
      <div class="tip" role="tooltip">Пересечение</div>
    </div>
  </main>
</div>
</body>
</html>
```
FILE: styles.css
```
* { box-sizing: border-box; }

body {
  margin: 0;
  height: 100vh;
  overflow: hidden;
  display: flex;
  flex-direction: column;
  background: #eeeeee;
  color: #3a3a3a;
  font: 14px/20px "Open Sans", "Noto Sans", sans-serif;
}

button {
  margin: 0;
  padding: 0;
  border: 0;
  background: none;
  color: inherit;
  font: inherit;
}

svg { display: block; flex: none; overflow: visible; }
.defs { position: absolute; width: 0; height: 0; }

.caret {
  display: inline-block;
  flex: none;
  width: 0;
  height: 0;
  border: 3px solid transparent;
  border-top: 4px solid #444;
  border-bottom: 0;
}
.caret.wide { border-width: 5px 5px 0; }
.caret.soft { border-top-color: #888; }

/* ribbon tabs */
.tabs { display: flex; gap: 2px; flex: none; height: 25px; overflow: hidden; background: #cacaca; }
.tab { flex: none; padding: 0 12px; line-height: 25px; color: #3a3a3a; text-decoration: none; white-space: nowrap; }
.tab.file { padding-right: 11px; background: #2579b3; color: #fff; }

/* ribbon */
.ribbon {
  flex: none;
  display: grid;
  grid-template-columns: 84px 78px 125px 213px 298px 82px 82px 107px 227px 162px;
  height: 121px;
  overflow: hidden;
  background: #e4efd5;
  border-bottom: 1px solid #c6c6c6;
}
.panel { display: flex; flex-direction: column; background: #eee; border-right: 1px solid #e2edd3; }
.panel:nth-child(8) { border-right: 5px solid #e4efd5; }
.body { height: 97px; padding-top: 3px; flex: none; }
.label { display: flex; align-items: center; justify-content: center; gap: 6px; height: 23px; }
.ctx .label { background: #e4efd5; margin-right: 3px; }

.ico { display: flex; align-items: center; justify-content: center; height: 46px; width: 46px; }
.ico.active { height: 40px; margin: 2px 0 4px; background: #b3d3f2; border: 1px solid #0a62c0; }
.sm { display: flex; align-items: center; justify-content: center; width: 31px; height: 31px; }
.big { display: flex; flex-direction: column; align-items: center; padding-top: 3px; }
.big span { margin-top: 6px; text-align: center; }
.off { color: #b0b0b0; }

.center, .stack { display: flex; flex-direction: column; align-items: center; }
.clip { display: flex; justify-content: space-between; padding-left: 16px; padding-right: 4px; }
.clip .caret { margin-top: 4px; border-top-color: #888; }
.geom { display: flex; padding-left: 6px; }
.geom > .caret { margin: 44px 0 0 4px; }
.rows { width: 124px; }
.row { display: flex; align-items: center; gap: 6px; height: 31px; }
.row .caret { margin-left: 5px; }
.grid2 { display: grid; grid-template-columns: repeat(2, 31px); height: 93px; }
.modify { display: flex; gap: 4px; padding-left: 1px; }
.grid4 { display: grid; grid-template-columns: repeat(4, 49px); justify-items: center; height: 92px; }
.grid3 { display: grid; grid-template-columns: repeat(3, 31px); height: 93px; }
.view { display: grid; grid-template-columns: 34px 10px 36px; grid-template-rows: repeat(3, 31px); align-items: center; justify-items: center; }
.measure { display: grid; grid-template-columns: 46px 18px; grid-template-rows: repeat(2, 46px); align-items: center; justify-items: center; padding-left: 9px; }
.create { display: grid; grid-template-columns: 49px 49px; grid-template-rows: repeat(2, 46px); justify-items: center; padding-left: 1px; }
.links { display: grid; grid-template-columns: 68px 74px 82px; align-items: start; }
.links.two { grid-template-columns: 78px 80px; }

.marked { position: relative; }
.marked::after { content: ""; position: absolute; inset: -4px -6px -7px -9px; border: 3px solid #dc0c10; z-index: 2; }

/* options bar */
.options { flex: none; display: flex; align-items: center; height: 35px; padding: 2px 0 0 10px; background: #e4efd5; border-bottom: 2px solid #cacaca; }
.mode { width: 264px; color: #a0a0a0; text-shadow: 1px 1px 0 #fff; white-space: nowrap; }
.opt { display: flex; align-items: center; gap: 4px; height: 27px; margin-right: 8px; color: #000; white-space: nowrap; }
.opt.dim { color: #808080; }
.opt.marked::after { inset: -3px -5px -4px -3px; }
.opt input { appearance: none; width: 16px; height: 16px; margin: 0; border: 1px solid #555; border-radius: 4px; background: #f6f6f6; }
.opt input:checked { border-color: #0a5cb5; background: #0a5cb5; display: grid; place-items: center; }
.opt input:checked::before { content: ""; width: 8px; height: 4px; border: solid #fff; border-width: 0 0 1px 1px; rotate: -45deg; margin-bottom: 2px; }
.opt input:disabled { border-color: #c8c8c8; }

/* properties */
.work { flex: 1; min-height: 0; display: flex; }
.props { flex: none; width: 553px; display: flex; flex-direction: column; border-right: 2px solid #cacaca; overflow: hidden; background: #efefef; }
.props-head { display: flex; align-items: center; justify-content: space-between; flex: none; height: 24px; padding: 0 6px 0 4px; }
.type { flex: none; display: flex; align-items: center; height: 88px; margin: 0 3px 0 2px; padding: 0 1px 0 3px; border: solid #cfcfcf; border-width: 1px 1px 0; }
.thumb { display: grid; place-items: center; width: 82px; height: 82px; border: 1px solid #ccc; }
.type-name { flex: 1; padding: 2px 0 0 5px; }
.type-open { display: grid; place-items: center; height: 20px; }
.instance { flex: none; display: flex; gap: 7px; height: 30px; padding: 2px 0 2px 2px; color: #9c9c9c; }
.instance select {
  appearance: none;
  width: 413px;
  height: 26px;
  padding: 0 4px;
  border: 0;
  background-color: #fafafa;
  color: #757575;
  font: inherit;
  opacity: 1;
  background-image: linear-gradient(45deg, transparent 46%, #999 46%, #999 56%, transparent 56%), linear-gradient(-45deg, transparent 46%, #999 46%, #999 56%, transparent 56%);
  background-size: 5px 5px;
  background-position: right 10px center, right 5px center;
  background-repeat: no-repeat;
}
.instance button { display: flex; align-items: center; gap: 3px; height: 24px; white-space: nowrap; }
.list { flex: 1; min-height: 0; display: flex; padding-left: 2px; overflow: hidden; }
table { flex: none; width: 525px; height: max-content; border-collapse: separate; border-spacing: 0; table-layout: fixed; }
.c1 { width: 256px; }
.c2 { width: 254px; }
.c3 { width: 15px; }
th { padding: 0; height: 24px; background: #dcdcdc; color: #000; font-weight: 400; text-align: left; }
.group { display: flex; justify-content: space-between; align-items: center; height: 24px; padding: 0 5px 0 2px; }
.group svg { margin-bottom: 6px; }
td { height: 24px; padding: 0 2px; border: 1px dotted #666; border-width: 0 1px 1px 0; line-height: 22px; white-space: nowrap; overflow: hidden; }
td:first-child { padding: 0 0 0 10px; }
td.indent { padding-left: 7px; }
td button { display: block; width: 100%; height: 19px; border-radius: 4px; background: #f9f9f9; color: #888; line-height: 19px; }
.ro { color: #7b7b7b; }
.track { padding: 21px 0 30px 8px; }
.thumbbar { width: 6px; height: 100%; background: #888; }

/* drawing area */
.view-area { flex: 1; min-width: 0; display: flex; flex-direction: column; background: #fff; }
.doc-tabs { flex: none; display: flex; height: 25px; background: #cacaca; }
.doc-tab { display: flex; align-items: center; gap: 8px; width: 160px; padding: 0 6px 0 5px; background: #ffb5ae; color: #000; }
.doc-tab .close { margin-left: auto; }
.canvas { position: relative; flex: 1; min-height: 0; overflow: hidden; }
.plan { position: absolute; left: 0; top: 0; }
.tip { position: absolute; left: 525px; top: 313px; padding: 2px 6px; border: 1px solid #ddd; border-radius: 4px; background: #f9f9f9; color: #5c5c5c; box-shadow: 3px 3px 2px #999; }
```
